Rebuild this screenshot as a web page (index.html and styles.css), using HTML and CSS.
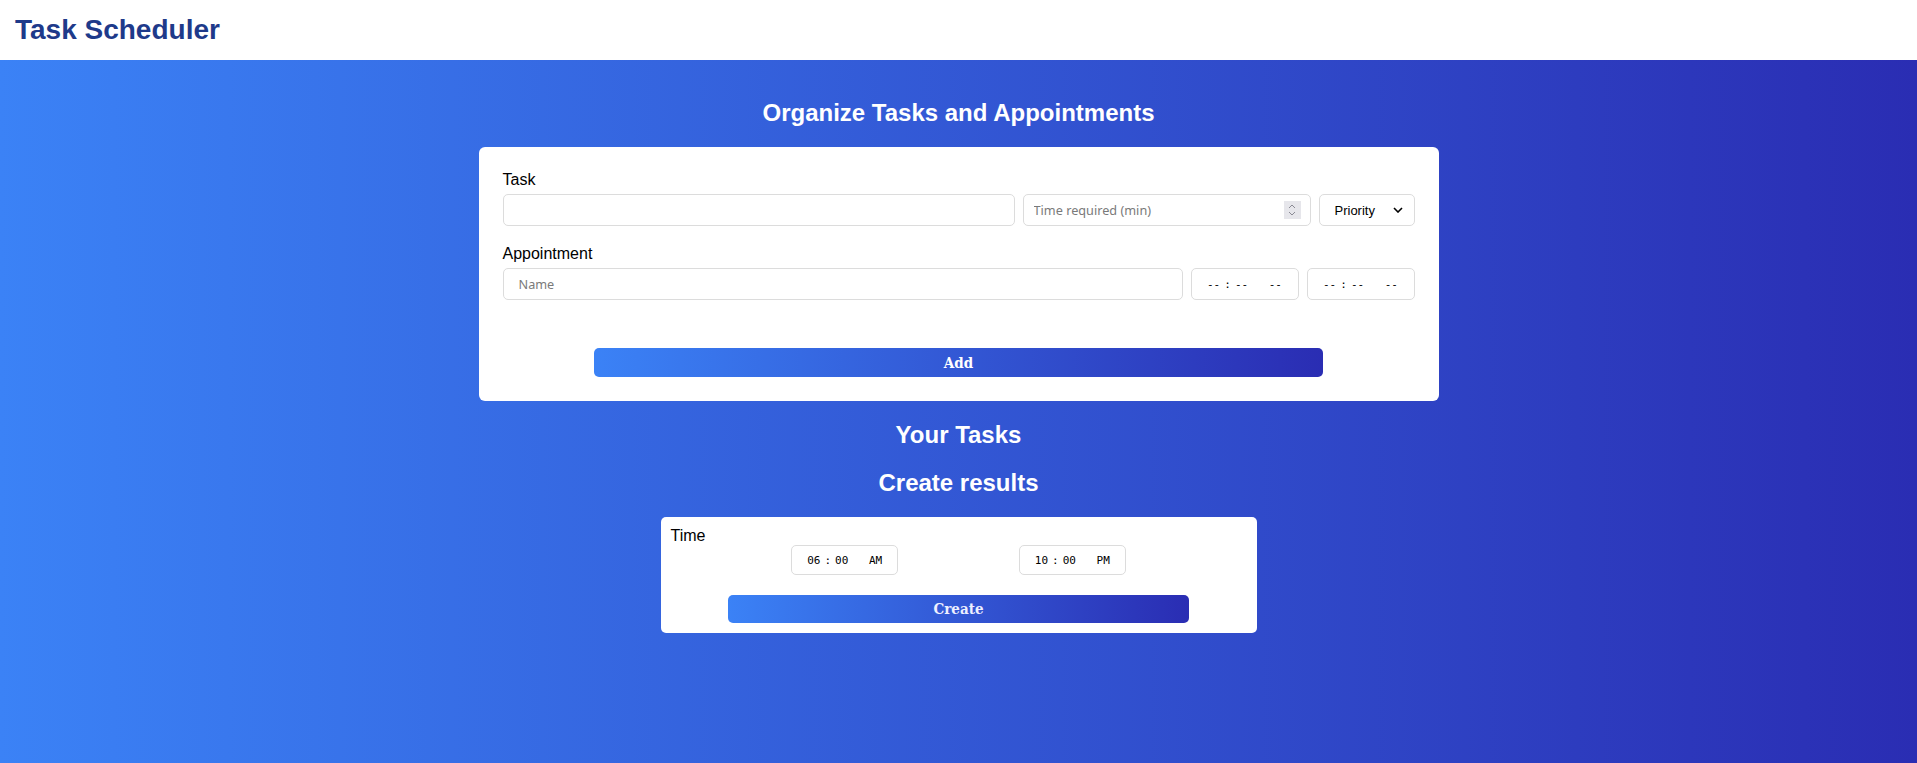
FILE: index.html
```html
<!DOCTYPE html>
<html lang="en">
<head>
<meta charset="utf-8">
<title>Task Scheduler</title>
<link rel="stylesheet" href="styles.css">
</head>
<body>
<header class="topbar">
  <h1 class="brand">Task Scheduler</h1>
</header>
<main class="main">
  <h2 class="section-title">Organize Tasks and Appointments</h2>
  <form class="card entry-card">
    <div class="field">
      <label class="field-label">Task</label>
      <div class="row">
        <input class="input task-name" type="text">
        <span class="number-wrap">
          <input class="input task-time" type="number" placeholder="Time required (min)">
          <span class="spinner">
            <svg width="8" height="14" viewBox="0 0 8 14"><path d="M1 5 L4 2 L7 5 M1 9 L4 12 L7 9" fill="none" stroke="#8a8a94" stroke-width="1"/></svg>
          </span>
        </span>
        <span class="select-wrap">
          <select class="input task-priority">
            <option>Priority</option>
            <option>High</option>
            <option>Medium</option>
            <option>Low</option>
          </select>
          <svg class="chevron" width="10" height="6" viewBox="0 0 10 6"><path d="M1 1 L5 5 L9 1" fill="none" stroke="#000" stroke-width="1.6"/></svg>
        </span>
      </div>
    </div>
    <div class="field last">
      <label class="field-label">Appointment</label>
      <div class="row">
        <input class="input appt-name" type="text" placeholder="Name">
        <input class="input time-input" type="time">
        <input class="input time-input" type="time">
      </div>
    </div>
    <button class="grad-btn add-btn" type="button">Add</button>
  </form>
  <h2 class="section-title">Your Tasks</h2>
  <h2 class="section-title">Create results</h2>
  <div class="card results-card">
    <label class="field-label plain">Time</label>
    <div class="times">
      <input class="input time-input small" type="time" value="06:00">
      <input class="input time-input small" type="time" value="22:00">
    </div>
    <button class="grad-btn create-btn" type="button">Create</button>
  </div>
</main>
</body>
</html>
```

FILE: styles.css
```css
html, body {
  margin: 0;
  padding: 0;
}
body {
  font-family: "Liberation Sans", Arial, sans-serif;
  background: #ffffff;
}
.topbar {
  height: 60px;
  background: #ffffff;
  display: flex;
  align-items: center;
  padding: 0 15px;
}
.brand {
  margin: 0;
  font-size: 28px;
  font-weight: bold;
  color: #1e3a8a;
}
.main {
  min-height: calc(100vh - 60px);
  box-sizing: border-box;
  padding: 19px 0 1px;
  background: linear-gradient(to right, #3b82f6, #2a2db3);
}
.section-title {
  margin: 20px 0;
  text-align: center;
  color: #ffffff;
  font-size: 24px;
  font-weight: bold;
}
.card {
  background: #ffffff;
  box-sizing: border-box;
  margin: 0 auto;
}
.entry-card {
  width: 960px;
  padding: 24px;
  border-radius: 6px;
}
.field {
  margin-bottom: 19px;
}
.field.last {
  margin-bottom: 0;
}
.field-label {
  display: block;
  font-size: 16px;
  color: #000000;
  margin-bottom: 5px;
}
.field-label.plain {
  margin-bottom: 0;
}
.row {
  display: flex;
  gap: 8px;
}
.input {
  box-sizing: border-box;
  height: 32px;
  border: 1px solid #dcdcdc;
  border-radius: 5px;
  background: #ffffff;
  font-family: "Noto Sans", "Open Sans", sans-serif;
  font-size: 12.7px;
  color: #000000;
  outline: none;
}
.input::placeholder {
  color: #7a7a7a;
}
.task-name {
  flex: 1;
  min-width: 0;
  padding: 0 10px;
}
.number-wrap {
  position: relative;
  display: block;
  width: 288px;
  height: 32px;
}
.task-time {
  width: 288px;
  padding: 0 10px;
  -moz-appearance: textfield;
}
.task-time::-webkit-inner-spin-button,
.task-time::-webkit-outer-spin-button {
  -webkit-appearance: none;
  margin: 0;
}
.spinner {
  position: absolute;
  right: 10px;
  top: 7px;
  width: 17px;
  height: 18px;
  background: #e6e6eb;
  display: flex;
  align-items: center;
  justify-content: center;
  pointer-events: none;
}
.select-wrap {
  position: relative;
  display: block;
  width: 96px;
  height: 32px;
}
.task-priority {
  -webkit-appearance: none;
  appearance: none;
  width: 96px;
  padding: 0 8px 0 15px;
  font-family: "Liberation Sans", Arial, sans-serif;
  font-size: 13px;
}
.chevron {
  position: absolute;
  right: 12px;
  top: 13px;
  pointer-events: none;
}
.appt-name {
  flex: 1;
  min-width: 0;
  padding: 0 15px;
}
.time-input {
  width: 108px;
  padding: 0;
  font-family: "DejaVu Sans Mono", "Liberation Mono", monospace;
  font-size: 11px;
  text-align: center;
}
.time-input.small {
  width: 107px;
  height: 30px;
}
.time-input::-webkit-calendar-picker-indicator {
  display: none;
}
.time-input::-webkit-datetime-edit {
  padding: 0;
}
.time-input::-webkit-datetime-edit-fields-wrapper {
  padding: 0;
}
.time-input::-webkit-datetime-edit-text {
  padding: 0 3px;
}
.time-input::-webkit-datetime-edit-ampm-field {
  margin-left: 6px;
}
.grad-btn {
  display: block;
  margin: 0 auto;
  width: 80%;
  border: none;
  border-radius: 5px;
  background: linear-gradient(to right, #3b82f6, #2a2db3);
  color: #ffffff;
  font-family: "DejaVu Serif Condensed", "DejaVu Serif", serif;
  font-weight: bold;
  font-size: 15px;
  cursor: pointer;
}
.add-btn {
  height: 29px;
  margin-top: 48px;
}
.results-card {
  width: 596px;
  padding: 10px;
  border-radius: 5px;
}
.times {
  display: flex;
  justify-content: space-evenly;
}
.create-btn {
  height: 28px;
  margin-top: 20px;
  color: #eef0ff;
}
```
